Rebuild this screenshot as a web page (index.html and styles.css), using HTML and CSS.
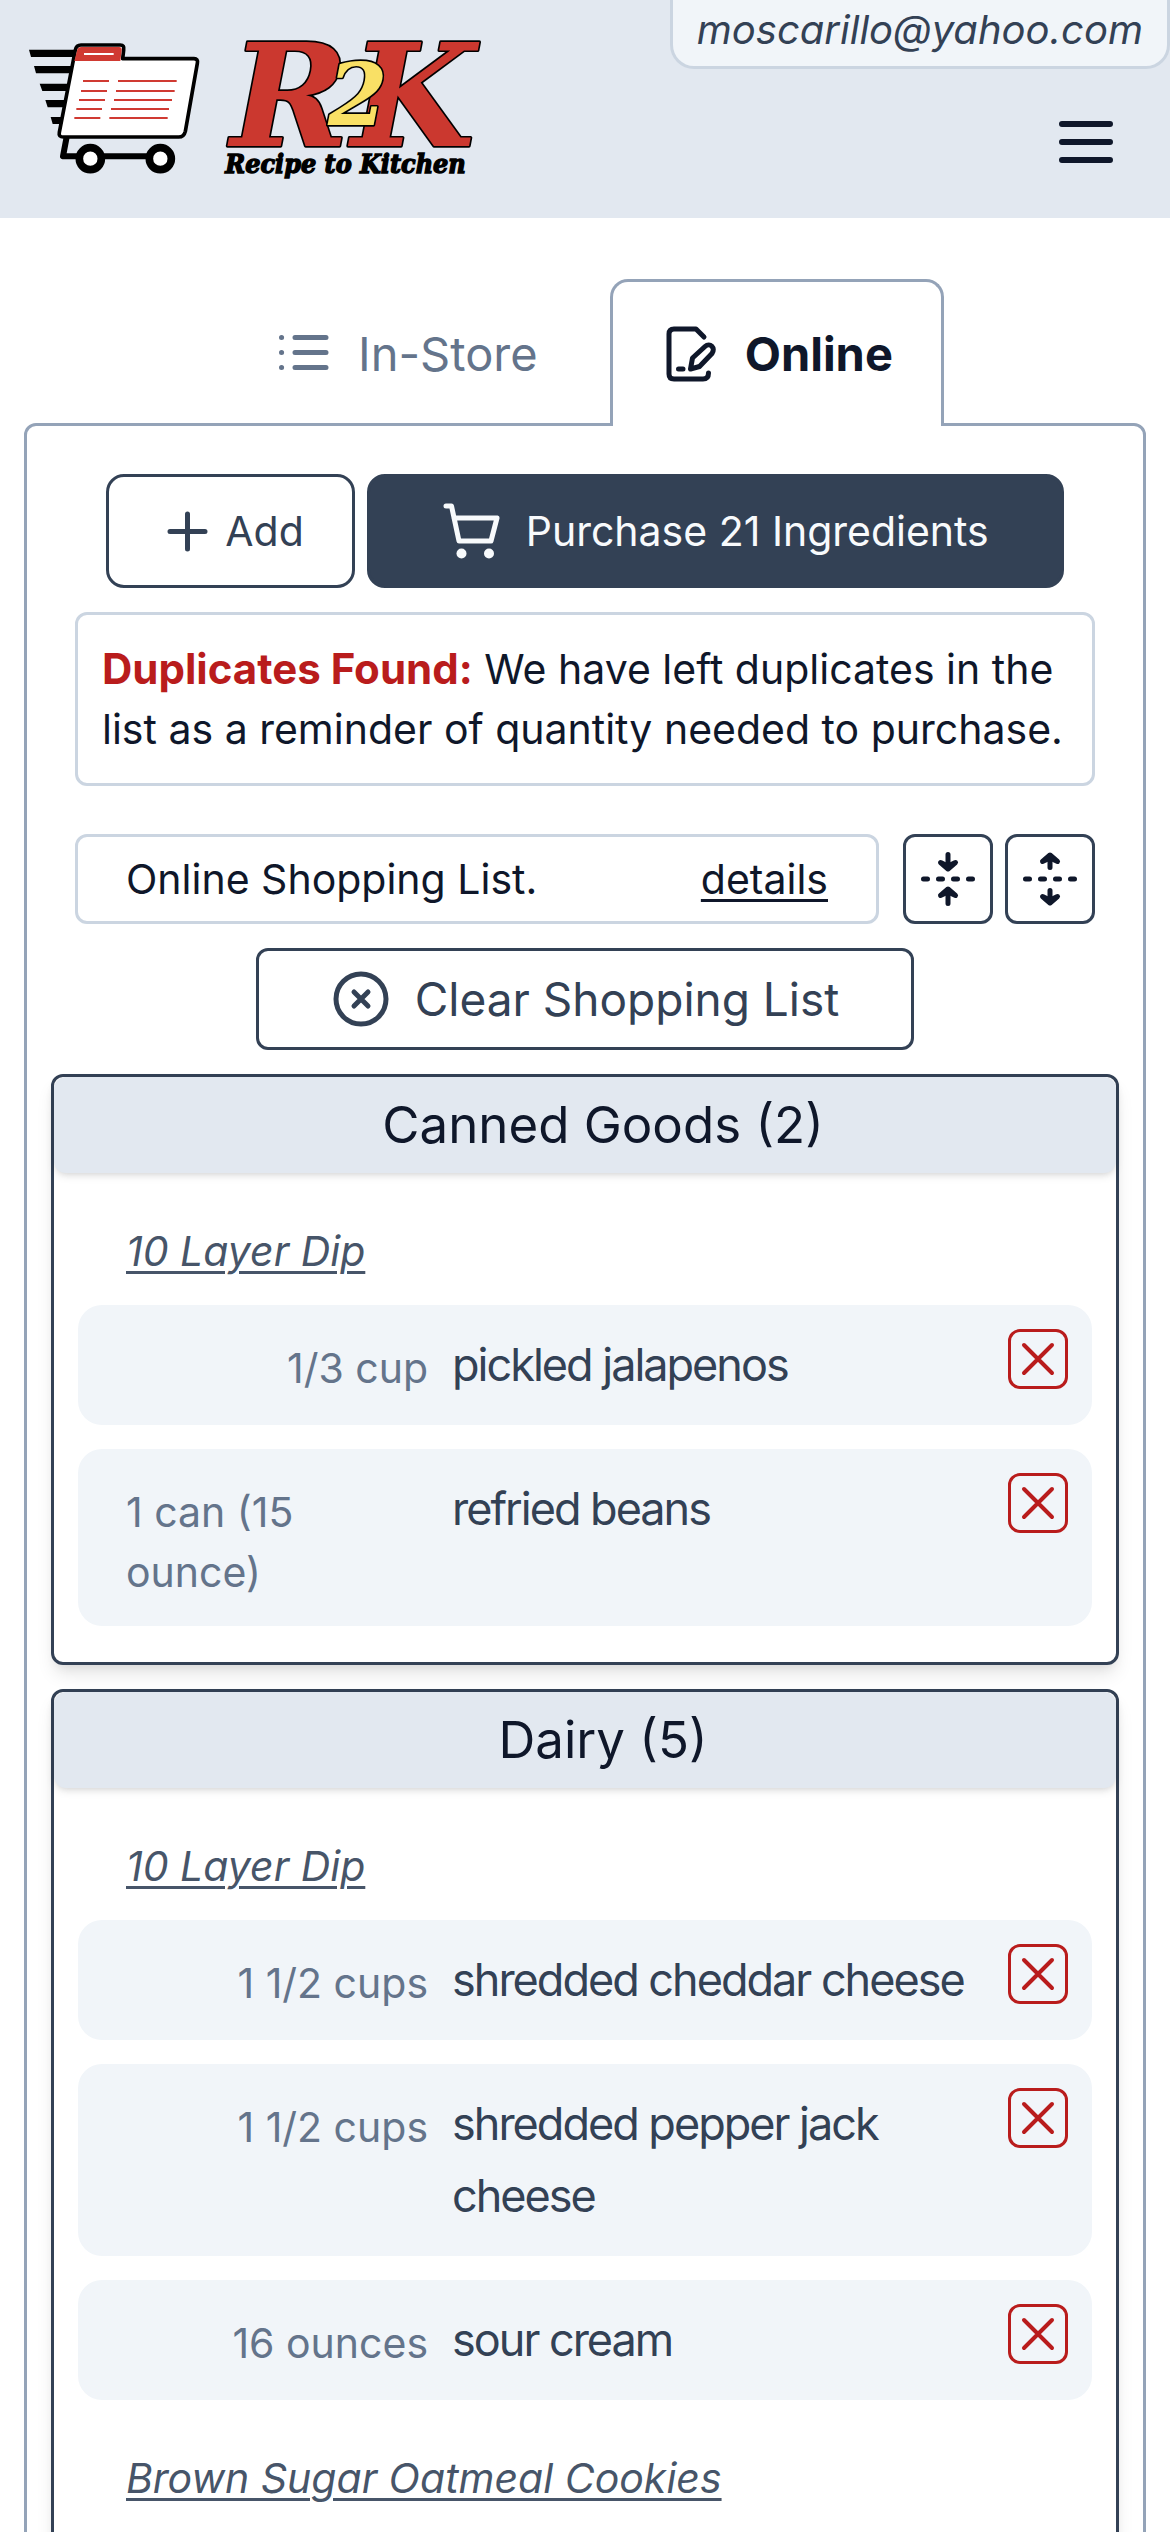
FILE: index.html
```html
<!DOCTYPE html>
<html lang="en">
<head>
<meta charset="utf-8">
<meta name="viewport" content="width=device-width, initial-scale=1">
<title>Recipe to Kitchen</title>
<link rel="stylesheet" href="styles.css">
</head>
<body>
<svg class="sprite" aria-hidden="true">
  <symbol id="cross" viewBox="0 0 54 54"><path d="M13 13L41 41M41 13L13 41" fill="none" stroke="currentColor" stroke-width="4" stroke-linecap="round"/></symbol>
</svg>
<div class="app">
  <header class="header">
    <a class="logo" href="#" aria-label="Recipe to Kitchen home">
      <svg class="logo-art" viewBox="72 108 1392 426">
        <path d="M87 149H230V171H93ZM102 198H225V220H108ZM119 251H215V273H127ZM136 300H205V322H143ZM152 351H195V372H158Z"/>
        <path d="M202 400L189 469H450" fill="none" stroke="#000" stroke-width="18" stroke-linejoin="round"/>
        <path d="M226 150Q229 135 243 135H361Q374 135 371 150L368 176H582Q595 176 592 190L556 394Q552 411 536 411H190Q175 411 178 397Z" fill="#fff" stroke="#000" stroke-width="11" stroke-linejoin="round"/>
        <path d="M231 152Q233 141 244 141H357Q367 141 365 152L361 183H223Z" fill="#d03a32"/>
        <path d="M252 162H341" stroke="#fff" stroke-width="6"/>
        <path d="M249 243H327M354 243H530M243 273H321M348 273H524M237 300H315M342 300H516M229 327H306M333 327H507M223 354H301M328 354H503" stroke="#d03a32" stroke-width="6"/>
        <circle cx="271" cy="476" r="33" fill="#fff" stroke="#000" stroke-width="23"/>
        <circle cx="481" cy="476" r="33" fill="#fff" stroke="#000" stroke-width="23"/>
        <g class="mono">
          <text class="mono-letter" x="692" y="438">R</text>
          <text class="mono-letter" x="1054" y="438">K</text>
          <text class="mono-digit" x="984" y="376">2</text>
        </g>
        <text class="tagline" x="676" y="518">Recipe to Kitchen</text>
      </svg>
    </a>
    <button class="menu" type="button" aria-label="Menu">
      <svg width="72" height="72" viewBox="0 0 24 24"><path d="M4 6h16M4 12h16M4 18h16" fill="none" stroke="currentColor" stroke-width="2" stroke-linecap="round"/></svg>
    </button>
    <div class="account">moscarillo@yahoo.com</div>
  </header>

  <main class="main">
    <nav class="tabs">
      <button class="tab" type="button">
        <svg class="icon" viewBox="0 0 60 60"><path d="M21 13.500H52M21 28.500H52M21 43.500H52M7.500 13.500h.1M7.500 28.500h.1M7.500 43.500h.1"/></svg>
        In-Store
      </button>
      <button class="tab tab-active" type="button">
        <svg class="icon" viewBox="0 0 60 60"><path d="M43 13L35 5H13Q8 5 8 10V50Q8 55 13 55H42Q47.500 55 47.500 49M17.500 45H22M29.500 45L31.500 34L44 22.500C49 18 55 24 51 29.500L38.500 42.500Z"/></svg>
        Online
      </button>
    </nav>

    <section class="panel">
      <div class="actions">
        <button class="btn btn-add" type="button">
          <svg class="icon" viewBox="0 0 60 60"><path d="M13 30.500H48M30.500 13V48"/></svg>
          Add
        </button>
        <button class="btn btn-buy" type="button">
          <svg class="icon" viewBox="0 0 60 60"><path d="M4 5H9.500L17 40H49L55 17H12"/><circle class="dot" cx="19.500" cy="52.500" r="5"/><circle class="dot" cx="47" cy="52.500" r="5"/></svg>
          Purchase 21 Ingredients
        </button>
      </div>

      <p class="notice"><strong>Duplicates Found:</strong> We have left duplicates in the list as a reminder of quantity needed to purchase.</p>

      <div class="list-bar">
        <div class="list-title"><span>Online Shopping List.</span><a href="#">details</a></div>
        <div class="folds">
          <button class="fold" type="button" aria-label="Collapse all">
            <svg class="icon" viewBox="0 0 60 60"><path d="M5.500 30H9.500M20.500 30H24.500M35.500 30H39.500M50.500 30H54.500M30 5.500V18M30 54.500V42"/><path class="dot" d="M22.500 13.500L30 20L37.500 13.500L30 17ZM22.500 46.500L30 40L37.500 46.500L30 43Z"/></svg>
          </button>
          <button class="fold" type="button" aria-label="Expand all">
            <svg class="icon" viewBox="0 0 60 60"><path d="M5.500 30H9.500M20.500 30H24.500M35.500 30H39.500M50.500 30H54.500M30 8V18.500M30 52V41.500"/><path class="dot" d="M22.500 12.500L30 6L37.500 12.500L30 9ZM22.500 47.500L30 54L37.500 47.500L30 51Z"/></svg>
          </button>
        </div>
      </div>

      <button class="btn btn-clear" type="button">
        <svg class="icon" viewBox="0 0 60 60"><circle cx="30" cy="30" r="25"/><path d="M23 23L37 37M37 23L23 37"/></svg>
        Clear Shopping List
      </button>

      <article class="card">
        <h2 class="card-title">Canned Goods (2)</h2>
        <a class="recipe" href="#">10 Layer Dip</a>
        <ul class="items">
          <li class="item"><span class="qty">1/3 cup</span><span class="name">pickled jalapenos</span><button class="remove" type="button" aria-label="Remove pickled jalapenos"><svg><use href="#cross"/></svg></button></li>
          <li class="item"><span class="qty">1 can (15 ounce)</span><span class="name">refried beans</span><button class="remove" type="button" aria-label="Remove refried beans"><svg><use href="#cross"/></svg></button></li>
        </ul>
      </article>

      <article class="card">
        <h2 class="card-title">Dairy (5)</h2>
        <a class="recipe" href="#">10 Layer Dip</a>
        <ul class="items">
          <li class="item"><span class="qty">1 1/2 cups</span><span class="name">shredded cheddar cheese</span><button class="remove" type="button" aria-label="Remove shredded cheddar cheese"><svg><use href="#cross"/></svg></button></li>
          <li class="item"><span class="qty">1 1/2 cups</span><span class="name">shredded pepper jack cheese</span><button class="remove" type="button" aria-label="Remove shredded pepper jack cheese"><svg><use href="#cross"/></svg></button></li>
          <li class="item"><span class="qty">16 ounces</span><span class="name">sour cream</span><button class="remove" type="button" aria-label="Remove sour cream"><svg><use href="#cross"/></svg></button></li>
        </ul>
        <a class="recipe" href="#">Brown Sugar Oatmeal Cookies</a>
      </article>
    </section>
  </main>
</div>
</body>
</html>
```
FILE: styles.css
```css
* { box-sizing: border-box; }

body {
  margin: 0;
  background: #fff;
  color: #0f172a;
  font-family: Inter, "Liberation Sans", sans-serif;
  font-size: 41px;
  line-height: 60px;
}

button { margin: 0; padding: 0; border: 0; background: none; color: inherit; font: inherit; cursor: pointer; }
a { color: inherit; text-decoration-thickness: 3px; text-underline-offset: 5px; }
svg { display: block; flex: none; }

.sprite { position: absolute; width: 0; height: 0; }
.app { height: 100vh; overflow: hidden; }

.icon { width: 60px; height: 60px; fill: none; stroke: currentColor; stroke-width: 5px; stroke-linecap: round; stroke-linejoin: round; }
.icon .dot { fill: currentColor; }
circle.dot { stroke: none; }

/* Header */
.header {
  position: relative;
  display: flex;
  align-items: flex-end;
  justify-content: space-between;
  padding: 36px 48px 40px 24px;
  background: #e2e8f0;
}
.logo-art { width: 464px; height: 142px; overflow: visible; }
.mono { font-family: "DejaVu Serif", serif; font-weight: 700; font-style: italic; stroke: #000; stroke-linejoin: round; paint-order: stroke; }
.mono-letter { font-size: 426px; fill: #cb382f; stroke-width: 10px; }
.mono-digit { font-size: 256px; fill: #f9e065; stroke-width: 10px; }
.tagline { font-family: "DejaVu Serif Condensed", "DejaVu Serif", serif; font-weight: 700; font-style: italic; font-size: 80px; stroke: #000; stroke-width: 4px; }
.account {
  position: absolute;
  top: 0;
  right: 0;
  padding: 0 24px 6px;
  border: 3px solid #cbd5e1;
  border-top: 0;
  border-radius: 0 0 24px 24px;
  background: #f1f5f9;
  color: #334155;
  font-size: 40px;
  font-style: italic;
}

/* Tabs */
.main { padding: 61px 24px 24px; }
.tabs { display: flex; justify-content: center; font-size: 47px; line-height: 72px; }
.tab {
  display: flex;
  align-items: center;
  gap: 24px;
  padding: 36px 72px 36px 48px;
  border-top: 3px solid transparent;
  color: #64748b;
}
.tab-active {
  position: relative;
  padding-right: 48px;
  border: 3px solid #94a3b8;
  border-bottom: 0;
  border-radius: 18px 18px 0 0;
  background: #fff;
  color: #0f172a;
  font-weight: 700;
}

.panel {
  display: flex;
  flex-direction: column;
  gap: 24px;
  margin-top: -3px;
  padding: 48px 24px;
  border: 3px solid #94a3b8;
  border-radius: 12px;
}

/* Buttons */
.actions { display: flex; justify-content: center; gap: 12px; }
.btn { display: flex; align-items: center; gap: 24px; border: 3px solid #334155; border-radius: 18px; color: #334155; }
.btn-add { gap: 8px; padding: 24px 48px; }
.btn-buy { padding: 24px 72px; background: #334155; color: #f8fafc; }
.btn-clear { align-self: center; padding: 12px 72px; border-radius: 12px; font-size: 46px; line-height: 72px; }

.notice { margin: 0 24px 24px; padding: 24px; border: 3px solid #cbd5e1; border-radius: 12px; }
.notice strong { color: #b91c1c; font-size: 42px; font-weight: 700; }

.list-bar { display: flex; gap: 24px; margin: 0 24px; }
.list-title { display: flex; flex: 1; justify-content: space-between; padding: 12px 48px; border: 3px solid #cbd5e1; border-radius: 12px; }
.folds { display: flex; gap: 12px; }
.fold { padding: 12px; border: 3px solid #334155; border-radius: 12px; }

/* Category cards */
.card {
  padding-bottom: 36px;
  border: 3px solid #334155;
  border-radius: 12px;
  background: #fff;
  box-shadow: 0 12px 18px -3px rgb(0 0 0 / 10%), 0 6px 12px -6px rgb(0 0 0 / 10%);
}
.card-title {
  margin: 0;
  padding: 12px 0 12px 36px;
  border-radius: 12px;
  background: #e2e8f0;
  box-shadow: 0 3px 9px rgb(0 0 0 / 10%), 0 3px 6px -3px rgb(0 0 0 / 10%);
  font-size: 51px;
  font-weight: 400;
  line-height: 72px;
  text-align: center;
}
.recipe { display: block; margin: 48px 72px 24px; color: #475569; font-style: italic; }
.items { display: flex; flex-direction: column; gap: 24px; margin: 0 24px; padding: 0; list-style: none; }
.item {
  display: grid;
  grid-template-columns: 38fr 62fr 60px;
  gap: 24px;
  align-items: start;
  padding: 24px;
  border-radius: 24px;
  background: #f1f5f9;
}
.qty { display: flex; justify-content: flex-end; padding: 9px 0 0 24px; color: #64748b; }
.name { color: #334155; font-size: 45px; line-height: 72px; letter-spacing: -2px; }
.remove { width: 60px; height: 60px; border: 3px solid #b91c1c; border-radius: 12px; color: #b91c1c; }
.remove svg { width: 54px; height: 54px; }
```
